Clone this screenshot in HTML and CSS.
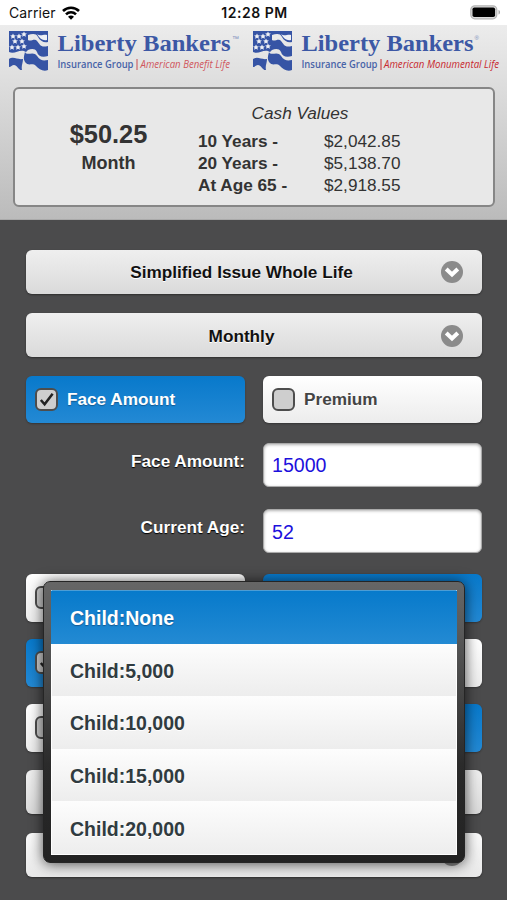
FILE: index.html
```
<!DOCTYPE html>
<html lang="en">
<head>
    <meta charset="UTF-8">
    <meta name="viewport" content="width=device-width, initial-scale=1.0">
    <title>Liberty Bankers Quote</title>
    <link rel="stylesheet" href="styles.css">
</head>
<body>

    <!-- shared icons -->
    <svg class="defs" width="0" height="0">
        <symbol id="flag" viewBox="0 0 40 40">
            <path fill="#3654a5" d="M0 0H39V11C35 12 31 10 29 6C27 2 23 3 19 4V9C22 11 25 7 28 10C31 13 31 17 39 15V25C33 27 29 25 28 21C26 17 22 18 19 19L17 21C11 17 6 24 0 21Z"/>
            <path fill="#3654a5" d="M16 21C18 25 22 21 26 23C30 26 30 31 39 29V39C34 41 30 38 27 35C23 31 20 36 16 31C14 28 15 25 16 21ZM0 28C5 25 8 29 14 28C14 32 12 35 13 39C10 40 8 34 5 34C3 34 2 36 0 36Z"/>
            <path fill="#eef0f5" d="M28 3C32 6 34 3 38 4V9C34 10 31 8 28 3Z"/>
            <g fill="#eef0f5">
                <path id="star" d="M4 2.500l.9 1.8 2 .1-1.500 1.400.5 2L4 6.800 2.100 7.800l.5-2L1.100 4.400l2-.1z"/>
                <use href="#star" x="6" y="0"/>
                <use href="#star" x="11" y="-2"/>
                <use href="#star" x="2" y="5"/>
                <use href="#star" x="9" y="5"/>
                <use href="#star" x="-1" y="11"/>
                <use href="#star" x="5" y="11"/>
                <use href="#star" x="11" y="10"/>
            </g>
        </symbol>
        <symbol id="arrow" viewBox="0 0 22 22">
            <circle cx="11" cy="11" r="11" fill="#8b8b8b"/>
            <path d="M5.200 8L11 13.500L16.800 8" fill="none" stroke="#fff" stroke-width="4"/>
        </symbol>
        <symbol id="check" viewBox="0 0 18 18">
            <path d="M3 9.500L7 14L15.500 3" fill="none" stroke="#222" stroke-width="2.700"/>
        </symbol>
    </svg>

    <div class="status-bar">
        <div class="carrier">
            <span>Carrier</span>
            <svg width="18" height="14" viewBox="0 0 18 14">
                <g fill="none" stroke="#000" stroke-width="2.600">
                    <path d="M1 5C5.500 .6 12.500 .6 17 5"/>
                    <path d="M4 8.300C6.800 5.500 11.200 5.500 14 8.300"/>
                </g>
                <path d="M9 13.700L6 10.700C7.700 9.100 10.300 9.100 12 10.700Z"/>
            </svg>
        </div>
        <div class="time">12:28 PM</div>
        <svg class="battery" width="31" height="15" viewBox="0 0 31 15">
            <rect x=".8" y=".8" width="26" height="13" rx="4" fill="#ddd" stroke="#b4b4b4" stroke-width="1.200"/>
            <rect x="2.500" y="2.500" width="22.600" height="9.600" rx="1.800"/>
            <path d="M28.500 5C30.500 5.500 30.500 9 28.500 9.500Z" fill="#aaa"/>
        </svg>
    </div>

    <div class="header">
        <div class="logos">
            <svg width="244" height="50" viewBox="0 0 244 50">
                <use href="#flag" x="9" y="6" width="40" height="40"/>
                <text class="brand" x="57.500" y="26" textLength="173" lengthAdjust="spacingAndGlyphs">Liberty Bankers</text>
                <text class="mark" x="232" y="16">™</text>
                <text class="group" x="57.500" y="43" textLength="76" lengthAdjust="spacingAndGlyphs">Insurance Group</text>
                <path d="M137 34V45" stroke="#c94a50"/>
                <text class="company" x="140.500" y="43" textLength="89.500" lengthAdjust="spacingAndGlyphs">American Benefit Life</text>
            </svg>
            <svg width="263" height="50" viewBox="0 0 263 50">
                <use href="#flag" x="9" y="6" width="40" height="40"/>
                <text class="brand" x="57.500" y="26" textLength="172" lengthAdjust="spacingAndGlyphs">Liberty Bankers</text>
                <text class="mark small" x="230.500" y="15">®</text>
                <text class="group" x="57.500" y="43" textLength="76" lengthAdjust="spacingAndGlyphs">Insurance Group</text>
                <path d="M137 34V45" stroke="#c8282e"/>
                <text class="company strong" x="140" y="43" textLength="115" lengthAdjust="spacingAndGlyphs">American Monumental Life</text>
            </svg>
        </div>

        <div class="quote-box">
            <div class="premium">
                <div class="amount">$50.25</div>
                <div class="period">Month</div>
            </div>
            <div class="cash-values">
                <div class="cash-title">Cash Values</div>
                <div class="cash-grid">
                    <b>10 Years -</b><span>$2,042.85</span>
                    <b>20 Years -</b><span>$5,138.70</span>
                    <b>At Age 65 -</b><span>$2,918.55</span>
                </div>
            </div>
        </div>
    </div>

    <div class="content">
        <div class="select plan">Simplified Issue Whole Life<svg class="arrow"><use href="#arrow"/></svg></div>
        <div class="select mode">Monthly<svg class="arrow"><use href="#arrow"/></svg></div>

        <div class="row">
            <div class="check active"><span class="box"><svg><use href="#check"/></svg></span><span>Face Amount</span></div>
            <div class="check"><span class="box"></span><span>Premium</span></div>
        </div>

        <div class="row field">
            <label for="face">Face Amount:</label>
            <input type="text" id="face" value="15000">
        </div>
        <div class="row field">
            <label for="age">Current Age:</label>
            <input type="text" id="age" value="52">
        </div>

        <div class="row tall">
            <div class="check"><span class="box"></span></div>
            <div class="check active"></div>
        </div>
        <div class="row tall">
            <div class="check active"><span class="box"><svg><use href="#check"/></svg></span></div>
            <div class="check"></div>
        </div>
        <div class="row tall">
            <div class="check"><span class="box"></span></div>
            <div class="check active"></div>
        </div>
        <div class="select"></div>
        <div class="select last"><svg class="arrow"><use href="#arrow"/></svg></div>
    </div>

    <div class="popup">
        <ul class="options">
            <li class="selected">Child:None</li>
            <li>Child:5,000</li>
            <li>Child:10,000</li>
            <li>Child:15,000</li>
            <li>Child:20,000</li>
        </ul>
    </div>

</body>
</html>
```
FILE: styles.css
```
* {
    box-sizing: border-box;
}

body {
    margin: 0;
    height: 900px;
    overflow: hidden;
    position: relative;
    background: #4b4b4c;
    font-family: "Liberation Sans", Arial, sans-serif;
    color: #333;
}

.defs {
    position: absolute;
}

.status-bar {
    height: 25px;
    padding: 0 6px 0 9px;
    background: #fff;
    color: #111;
    display: grid;
    grid-template-columns: 1fr auto 1fr;
    align-items: center;
    font-family: Inter, sans-serif;
    font-size: 14px;
    line-height: 25px;
}

.carrier {
    display: flex;
    align-items: center;
    gap: 6px;
    letter-spacing: 0.1px;
}

.time {
    font-weight: 600;
    letter-spacing: 0.5px;
    margin-left: -1px;
}

.battery {
    justify-self: end;
}

.header {
    height: 195px;
    background: linear-gradient(#ececec, #bbb);
    border-bottom: 1px solid #aaa;
}

.logos {
    display: flex;
    height: 62px;
}

.brand {
    font-family: "Liberation Serif", serif;
    font-weight: bold;
    font-size: 24px;
    fill: #3c58a5;
}

.mark {
    font-size: 7px;
    fill: #7b8dbb;
}

.mark.small {
    font-size: 6px;
}

.group,
.company {
    font-family: "Open Sans", sans-serif;
    font-size: 10px;
    font-weight: 600;
    fill: #4864a8;
}

.company {
    font-style: italic;
    font-weight: 500;
    fill: #d0565c;
}

.company.strong {
    fill: #c8282e;
}

.quote-box {
    display: flex;
    height: 120px;
    margin: 0 12px 0 13px;
    background: #e8e8e8;
    border: 2px solid #868686;
    border-radius: 6px;
}

.premium {
    width: 183px;
    padding: 30px 0 0 4px;
    text-align: center;
    font-weight: bold;
}

.amount {
    font-size: 25.4px;
    line-height: 30px;
}

.period {
    font-size: 18px;
    line-height: 28px;
}

.cash-values {
    width: 204px;
}

.cash-title {
    padding-top: 13px;
    font-size: 17.2px;
    font-style: italic;
    line-height: 23px;
    text-align: center;
}

.cash-grid {
    display: grid;
    grid-template-columns: 126px 1fr;
    margin-top: 5px;
    font-size: 17.2px;
    line-height: 22px;
}

.cash-grid span {
    font-size: 17.2px;
}

.content {
    display: flex;
    flex-direction: column;
    padding: 30px 25px 0 26px;
    font-weight: bold;
    font-size: 17.2px;
}

.select {
    position: relative;
    height: 44px;
    flex: none;
    margin-bottom: 19px;
    padding-right: 25px;
    border-radius: 6px;
    background: linear-gradient(#efefef, #dadada);
    box-shadow: 0 1px 2px rgba(0, 0, 0, 0.4);
    color: #111;
    line-height: 45px;
    text-align: center;
    text-shadow: 0 1px 0 #fff;
}

.mode {
    line-height: 47px;
}

.arrow {
    position: absolute;
    top: 11px;
    right: 19px;
    width: 22px;
    height: 22px;
}

.mode .arrow {
    top: 12px;
}

.row {
    display: grid;
    grid-template-columns: 219px 219px;
    gap: 18px;
    height: 47px;
    flex: none;
    margin-bottom: 20px;
}

.mode + .row {
    margin-top: -0.5px;
}

.check {
    display: flex;
    align-items: center;
    gap: 9px;
    padding-left: 9px;
    border-radius: 6px;
    background: linear-gradient(#fff, #ececec);
    box-shadow: 0 1px 2px rgba(0, 0, 0, 0.3);
    color: #444;
    text-shadow: 0 1px 0 #fff;
}

.check.active {
    background: linear-gradient(#0879cb, #2389d4);
    color: #fff;
    text-shadow: 0 1px 1px #145a92;
}

.box {
    width: 23px;
    height: 23px;
    padding: 1px;
    border: 2px solid #4d4d4d;
    border-radius: 6px;
    background: #cecece;
}

.box svg {
    display: block;
    width: 17px;
    height: 17px;
}

.field {
    height: 44px;
    margin-bottom: 22.5px;
}

.field label {
    padding-top: 8px;
    color: #fff;
    line-height: 20px;
    text-align: right;
    text-shadow: 0 1px 1px #000;
}

.field input {
    width: 100%;
    height: 44px;
    padding: 2px 8px 0;
    border: 1px solid #aaa;
    border-radius: 6px;
    background: #fff;
    box-shadow: inset 0 1px 3px rgba(0, 0, 0, 0.3);
    color: #1c10dc;
    font-family: inherit;
    font-size: 19.6px;
}

.field + .tall {
    margin-top: -2px;
}

.tall {
    height: 48px;
    margin-bottom: 17px;
}

.tall + .select {
    margin-top: 1px;
}

.last {
    background: linear-gradient(#fafafa, #e8e8e8);
}

/* option list shown over the form */
.popup {
    position: absolute;
    left: 43px;
    top: 581px;
    width: 422px;
    height: 282px;
    padding: 8px 7px 7px;
    border: 1px solid #252525;
    border-radius: 7px;
    background: linear-gradient(#666 0%, #5c5c5c 15%, #2b2b2b 65%, #222 100%);
    box-shadow: 0 1px 14px rgba(0, 0, 0, 0.7);
}

.options {
    display: grid;
    grid-template-rows: repeat(5, 1fr);
    height: 265px;
    margin: 0;
    padding: 0;
    list-style: none;
    border: 1px solid #fff;
    border-top-color: #4c9dd5;
}

.options li {
    display: flex;
    align-items: center;
    padding: 3px 18px 0;
    background: linear-gradient(#fdfdfd, #ededed);
    color: #303b40;
    font-weight: bold;
    font-size: 19.5px;
    text-shadow: 0 1px 0 #fff;
}

.options .selected {
    margin: 0 -1px;
    padding-left: 19px;
    background: linear-gradient(#077acb, #238ad3);
    color: #fff;
    text-shadow: 0 1px 1px #145a92;
}
```
